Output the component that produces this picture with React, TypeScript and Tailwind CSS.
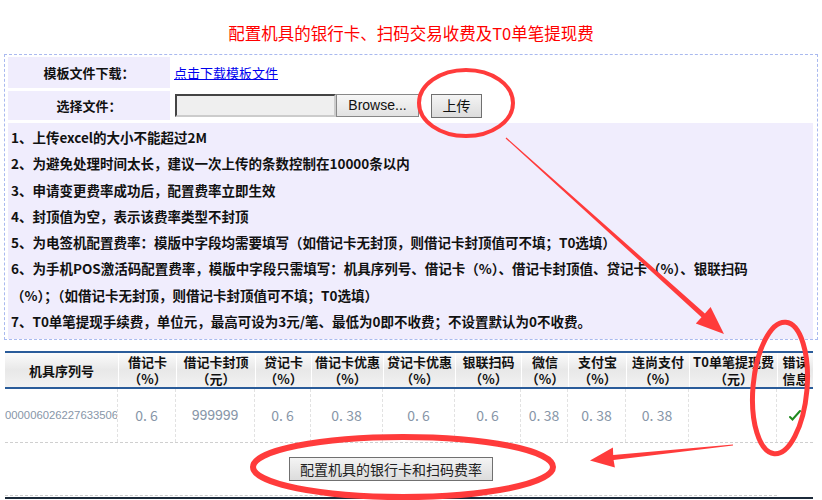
import React from "react";

const columns = [
  { top: "机具序列号", bottom: "" },
  { top: "借记卡", bottom: "（%）" },
  { top: "借记卡封顶", bottom: "（元）" },
  { top: "贷记卡", bottom: "（%）" },
  { top: "借记卡优惠", bottom: "（%）" },
  { top: "贷记卡优惠", bottom: "（%）" },
  { top: "银联扫码", bottom: "（%）" },
  { top: "微信", bottom: "（%）" },
  { top: "支付宝", bottom: "（%）" },
  { top: "连尚支付", bottom: "（%）" },
  { top: "T0单笔提现费", bottom: "（元）" },
  { top: "错误", bottom: "信息" },
];

const rowValues = ["0. 6", "999999", "0. 6", "0. 38", "0. 6", "0. 6", "0. 38", "0. 38", "0. 38", ""];

const tips = [
  "1、上传excel的大小不能超过2M",
  "2、为避免处理时间太长，建议一次上传的条数控制在10000条以内",
  "3、申请变更费率成功后，配置费率立即生效",
  "4、封顶值为空，表示该费率类型不封顶",
  "5、为电签机配置费率：模版中字段均需要填写（如借记卡无封顶，则借记卡封顶值可不填；T0选填）",
  "6、为手机POS激活码配置费率，模版中字段只需填写：机具序列号、借记卡（%）、借记卡封顶值、贷记卡（%）、银联扫码",
  "（%）；（如借记卡无封顶，则借记卡封顶值可不填；T0选填）",
  "7、T0单笔提现手续费，单位元，最高可设为3元/笔、最低为0即不收费；不设置默认为0不收费。",
];

const grid =
  "grid grid-cols-[113px_58px_79px_56px_72px_72px_66px_47px_58px_63px_88px_36px]";

function Annotations() {
  return (
    <svg className="pointer-events-none absolute inset-0" width="822" height="500" viewBox="0 0 822 500">
      <g fill="none" stroke="#ff3b3b">
        <ellipse cx="466" cy="103" rx="47" ry="33" strokeWidth="4" />
        <ellipse cx="780" cy="388" rx="27" ry="66" strokeWidth="5" transform="rotate(5 780 388)" />
        <ellipse cx="403" cy="467" rx="150" ry="30" strokeWidth="6" />
      </g>
      <g fill="#ff3b3b">
        <polygon points="505.6,138.4 506.4,137.6 704.9,313.4 710.6,307.1 724,334 695.8,323.5 701.5,317.2" />
        <polygon points="733,444.5 733,445.5 613.6,460 614.9,467.4 590,460.5 612.9,447.6 613.2,455" />
      </g>
    </svg>
  );
}

function CheckMark() {
  return (
    <svg width="12" height="11" viewBox="0 0 12 11">
      <path d="M1 7 L3.5 9.5 L11 1" fill="none" stroke="#1f8a1f" strokeWidth="2" strokeLinecap="round" />
    </svg>
  );
}

export default function App() {
  return (
    <div className="relative h-[500px] w-[822px] overflow-hidden bg-white font-['Noto_Sans_CJK_SC',sans-serif] text-[#111]">
      <div className="pt-[22px] text-center text-[16.5px] leading-[22px] text-[#ff0000]">
        配置机具的银行卡、扫码交易收费及T0单笔提现费
      </div>

      <div className="mx-[4px] mt-[10px] flex flex-col gap-[3px] border border-dashed border-[#a9b9ef] px-[3px] pt-[2px]">
        <div className="grid h-[31px] grid-cols-[162px_1fr] gap-[3px]">
          <div className="flex items-center justify-center bg-[#f0edfd] text-[13px] font-bold">模板文件下载：</div>
          <div className="flex items-center pl-[1px]">
            <a href="#" className="text-[13px] text-[#0000ee] underline">
              点击下载模板文件
            </a>
          </div>
        </div>
        <div className="grid h-[29px] grid-cols-[162px_1fr] gap-[3px]">
          <div className="flex items-center justify-center bg-[#f0edfd] text-[13px] font-bold">选择文件：</div>
          <div className="flex items-center pl-[2px]">
            <div className="h-[23px] w-[161px] border-2 border-t-[#444] border-l-[#444] border-r-[#ccc] border-b-[#ccc] bg-[#efefef]" />
            <div className="flex h-[23px] w-[83px] items-center justify-center border border-[#888] bg-gradient-to-b from-[#f6f6f6] to-[#e2e2e2] font-['Liberation_Sans',sans-serif] text-[14px]">
              Browse...
            </div>
            <div className="ml-[12px] flex h-[24px] w-[51px] items-center justify-center border border-[#707070] bg-gradient-to-b from-[#f4f4f4] to-[#dcdcdc] text-[14px]">
              上传
            </div>
          </div>
        </div>
        <div className="mr-[1px] h-[216px] bg-[#f0edfd] pl-[3px] pt-[1px] text-[13.5px] font-bold leading-[26.3px]">
          {tips.map((t) => (
            <div key={t} className="whitespace-nowrap">
              {t}
            </div>
          ))}
        </div>
      </div>

      <div className="ml-[5px] mt-[11px] w-[808px]">
        <div className={`${grid} h-[38px] border-y-2 border-[#2a5c9a] bg-gradient-to-b from-[#fbfbfb] via-[#e8e8e8] to-[#f2f2f2] text-[13px] font-bold leading-[17px]`}>
          {columns.map((c) => (
            <div key={c.top} className="flex flex-col items-center justify-center whitespace-nowrap border-l border-white first:border-l-0">
              <span>{c.top}</span>
              {c.bottom && <span>{c.bottom}</span>}
            </div>
          ))}
        </div>
        <div className={`${grid} h-[54px] border-b border-dashed border-[#cfcfcf] text-[14px] text-[#8796a8]`}>
          <div className="flex items-center overflow-hidden border-r border-dashed border-[#e2e2e2] font-['Liberation_Sans',sans-serif] text-[11.3px]">
            000006026227633506
          </div>
          {rowValues.map((v, i) => (
            <div
              key={i}
              className={`flex items-center justify-center border-r border-dashed border-[#e2e2e2] ${v === "999999" ? "font-['Liberation_Sans',sans-serif]" : ""}`}
            >
              {v}
            </div>
          ))}
          <div className="flex items-center justify-center">
            <CheckMark />
          </div>
        </div>
        <div className="flex h-[53px] w-[772px] items-center justify-center border-b border-dashed border-[#cfcfcf]">
          <div className="flex h-[24px] w-[204px] items-center justify-center border border-[#707070] bg-gradient-to-b from-[#f4f4f4] to-[#dcdcdc] text-[14px] text-[#222]">
            配置机具的银行卡和扫码费率
          </div>
        </div>
        <div className="mt-[1px] h-[2px] bg-[#1c2a3a]" />
      </div>

      <Annotations />
    </div>
  );
}
